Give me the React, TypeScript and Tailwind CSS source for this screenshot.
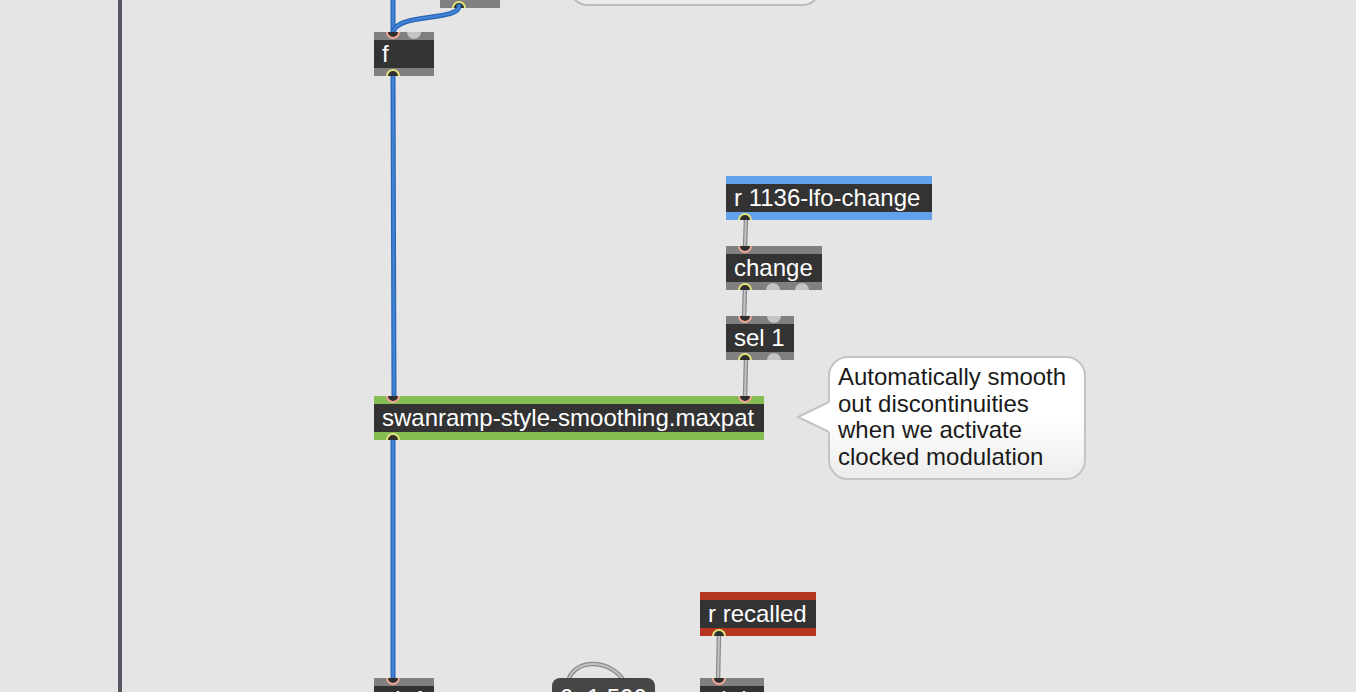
import React from 'react';

type Port = { at: number; kind: 'in' | 'out' | 'idle' };

const bandColor: Record<string, string> = {
  gray: 'bg-[#808080]',
  blue: 'bg-[#62a1ec]',
  green: 'bg-[#84bd52]',
  red: 'bg-[#b5361f]',
};

const PortDot: React.FC<{ p: Port; top: boolean }> = ({ p, top }) => {
  const ring =
    p.kind === 'in'
      ? 'bg-[#2e2e2e] border-2 border-[#f2a596]'
      : p.kind === 'out'
      ? 'bg-[#2e2e2e] border-2 border-[#e4e37a]'
      : 'bg-[#c4c4c4]';
  return (
    <span
      className={`absolute w-[14px] h-[14px] rounded-full ${ring} ${top ? '-top-[7px]' : '-bottom-[7px]'}`}
      style={{ left: p.at - 7 }}
    />
  );
};

// a Max object box: band / dark text row / band
const MaxBox: React.FC<{
  x: number;
  y: number;
  w: number;
  text: string;
  band?: string;
  ins?: Port[];
  outs?: Port[];
}> = ({ x, y, w, text, band = 'gray', ins = [], outs = [] }) => (
  <div className="absolute overflow-hidden flex flex-col" style={{ left: x, top: y, width: w }}>
    <div className={`relative h-[8px] ${bandColor[band]}`}>
      {ins.map((p, i) => (
        <PortDot key={i} p={p} top />
      ))}
    </div>
    <div className="h-[28px] bg-[#333333] text-white text-[24px] leading-[28px] pl-2 whitespace-nowrap">
      {text}
    </div>
    <div className={`relative h-[8px] ${bandColor[band]}`}>
      {outs.map((p, i) => (
        <PortDot key={i} p={p} top={false} />
      ))}
    </div>
  </div>
);

const Cord: React.FC<{ d: string; blue?: boolean }> = ({ d, blue }) =>
  blue ? (
    <g fill="none" strokeLinecap="round">
      <path d={d} stroke="#2a64b4" strokeWidth={5} />
      <path d={d} stroke="#3f82d6" strokeWidth={2.5} />
    </g>
  ) : (
    <g fill="none" strokeLinecap="round">
      <path d={d} stroke="#8a8a8a" strokeWidth={4.5} />
      <path d={d} stroke="#c2c2c2" strokeWidth={2} />
    </g>
  );

export default function App() {
  return (
    <div
      className="relative w-[1356px] h-[692px] overflow-hidden bg-[#e5e5e5]"
      style={{ fontFamily: '"Liberation Sans", Arial, sans-serif' }}
    >
      {/* left edge of the patcher */}
      <div className="absolute left-[118px] top-0 h-full w-[4px] bg-[#555860]" />

      {/* comment bubble above, mostly scrolled off */}
      <div className="absolute left-[568px] -top-[60px] w-[254px] h-[66px] rounded-[20px] border-2 border-[#bdbdbd] bg-[#ececec]" />

      {/* box above, cut by the top edge */}
      <div className="absolute left-[440px] -top-[36px] w-[60px] h-[44px] overflow-hidden flex flex-col">
        <div className="h-[8px] bg-[#808080]" />
        <div className="h-[28px] bg-[#333333]" />
        <div className="relative h-[8px] bg-[#808080]">
          <PortDot p={{ at: 19, kind: 'out' }} top={false} />
        </div>
      </div>

      <svg className="absolute left-0 top-0" width={1356} height={692}>
        <Cord blue d="M393,0 L393,34" />
        <Cord blue d="M459,6 C459,22 393,12 393,34" />
        <Cord blue d="M393,74 L394,398" />
        <Cord blue d="M393,438 L393,680" />
        <Cord d="M746,218 L745,248" />
        <Cord d="M745,288 L744,318" />
        <Cord d="M746,358 L745,398" />
        <Cord d="M719,634 L718,680" />
        <Cord d="M568,682 C572,660 608,656 625,682" />
      </svg>

      <MaxBox
        x={374}
        y={32}
        w={60}
        text="f"
        ins={[
          { at: 19, kind: 'in' },
          { at: 40, kind: 'idle' },
        ]}
        outs={[{ at: 19, kind: 'out' }]}
      />

      <MaxBox x={726} y={176} w={206} text="r 1136-lfo-change" band="blue" outs={[{ at: 19, kind: 'out' }]} />

      <MaxBox
        x={726}
        y={246}
        w={96}
        text="change"
        ins={[{ at: 19, kind: 'in' }]}
        outs={[
          { at: 19, kind: 'out' },
          { at: 47, kind: 'idle' },
          { at: 76, kind: 'idle' },
        ]}
      />

      <MaxBox
        x={726}
        y={316}
        w={68}
        text="sel 1"
        ins={[
          { at: 19, kind: 'in' },
          { at: 48, kind: 'idle' },
        ]}
        outs={[
          { at: 19, kind: 'out' },
          { at: 48, kind: 'idle' },
        ]}
      />

      <MaxBox
        x={374}
        y={396}
        w={390}
        text="swanramp-style-smoothing.maxpat"
        band="green"
        ins={[
          { at: 19, kind: 'in' },
          { at: 371, kind: 'in' },
        ]}
        outs={[{ at: 19, kind: 'out' }]}
      />

      {/* comment */}
      <div className="absolute left-[828px] top-[356px] w-[258px] h-[124px] rounded-[20px] border-2 border-[#c4c4c4] bg-gradient-to-b from-white via-white to-[#ececec] pl-[8px] pt-[6px] text-[#1a1a1a] text-[24px] leading-[26.7px]">
        Automatically smooth
        <br />
        out discontinuities
        <br />
        when we activate
        <br />
        clocked modulation
      </div>
      <svg className="absolute left-[796px] top-[398px]" width={36} height={40}>
        <polygon points="35,3 2,19 35,35" fill="#ffffff" />
        <polyline points="33,4 2,19 33,34" fill="none" stroke="#c4c4c4" strokeWidth={2} />
      </svg>

      <MaxBox x={700} y={592} w={116} text="r recalled" band="red" outs={[{ at: 19, kind: 'out' }]} />

      {/* boxes cut by the bottom edge */}
      <MaxBox x={374} y={678} w={60} text="t b f" ins={[{ at: 19, kind: 'in' }]} />
      <div className="absolute left-[552px] top-[678px] w-[103px] h-[40px] rounded-[8px] bg-[#464646] text-white text-[24px] leading-[28px] pl-2 pt-[6px] whitespace-nowrap">
        0, 1 500
      </div>
      <MaxBox x={700} y={678} w={64} text="t b b" ins={[{ at: 19, kind: 'in' }]} />
    </div>
  );
}
